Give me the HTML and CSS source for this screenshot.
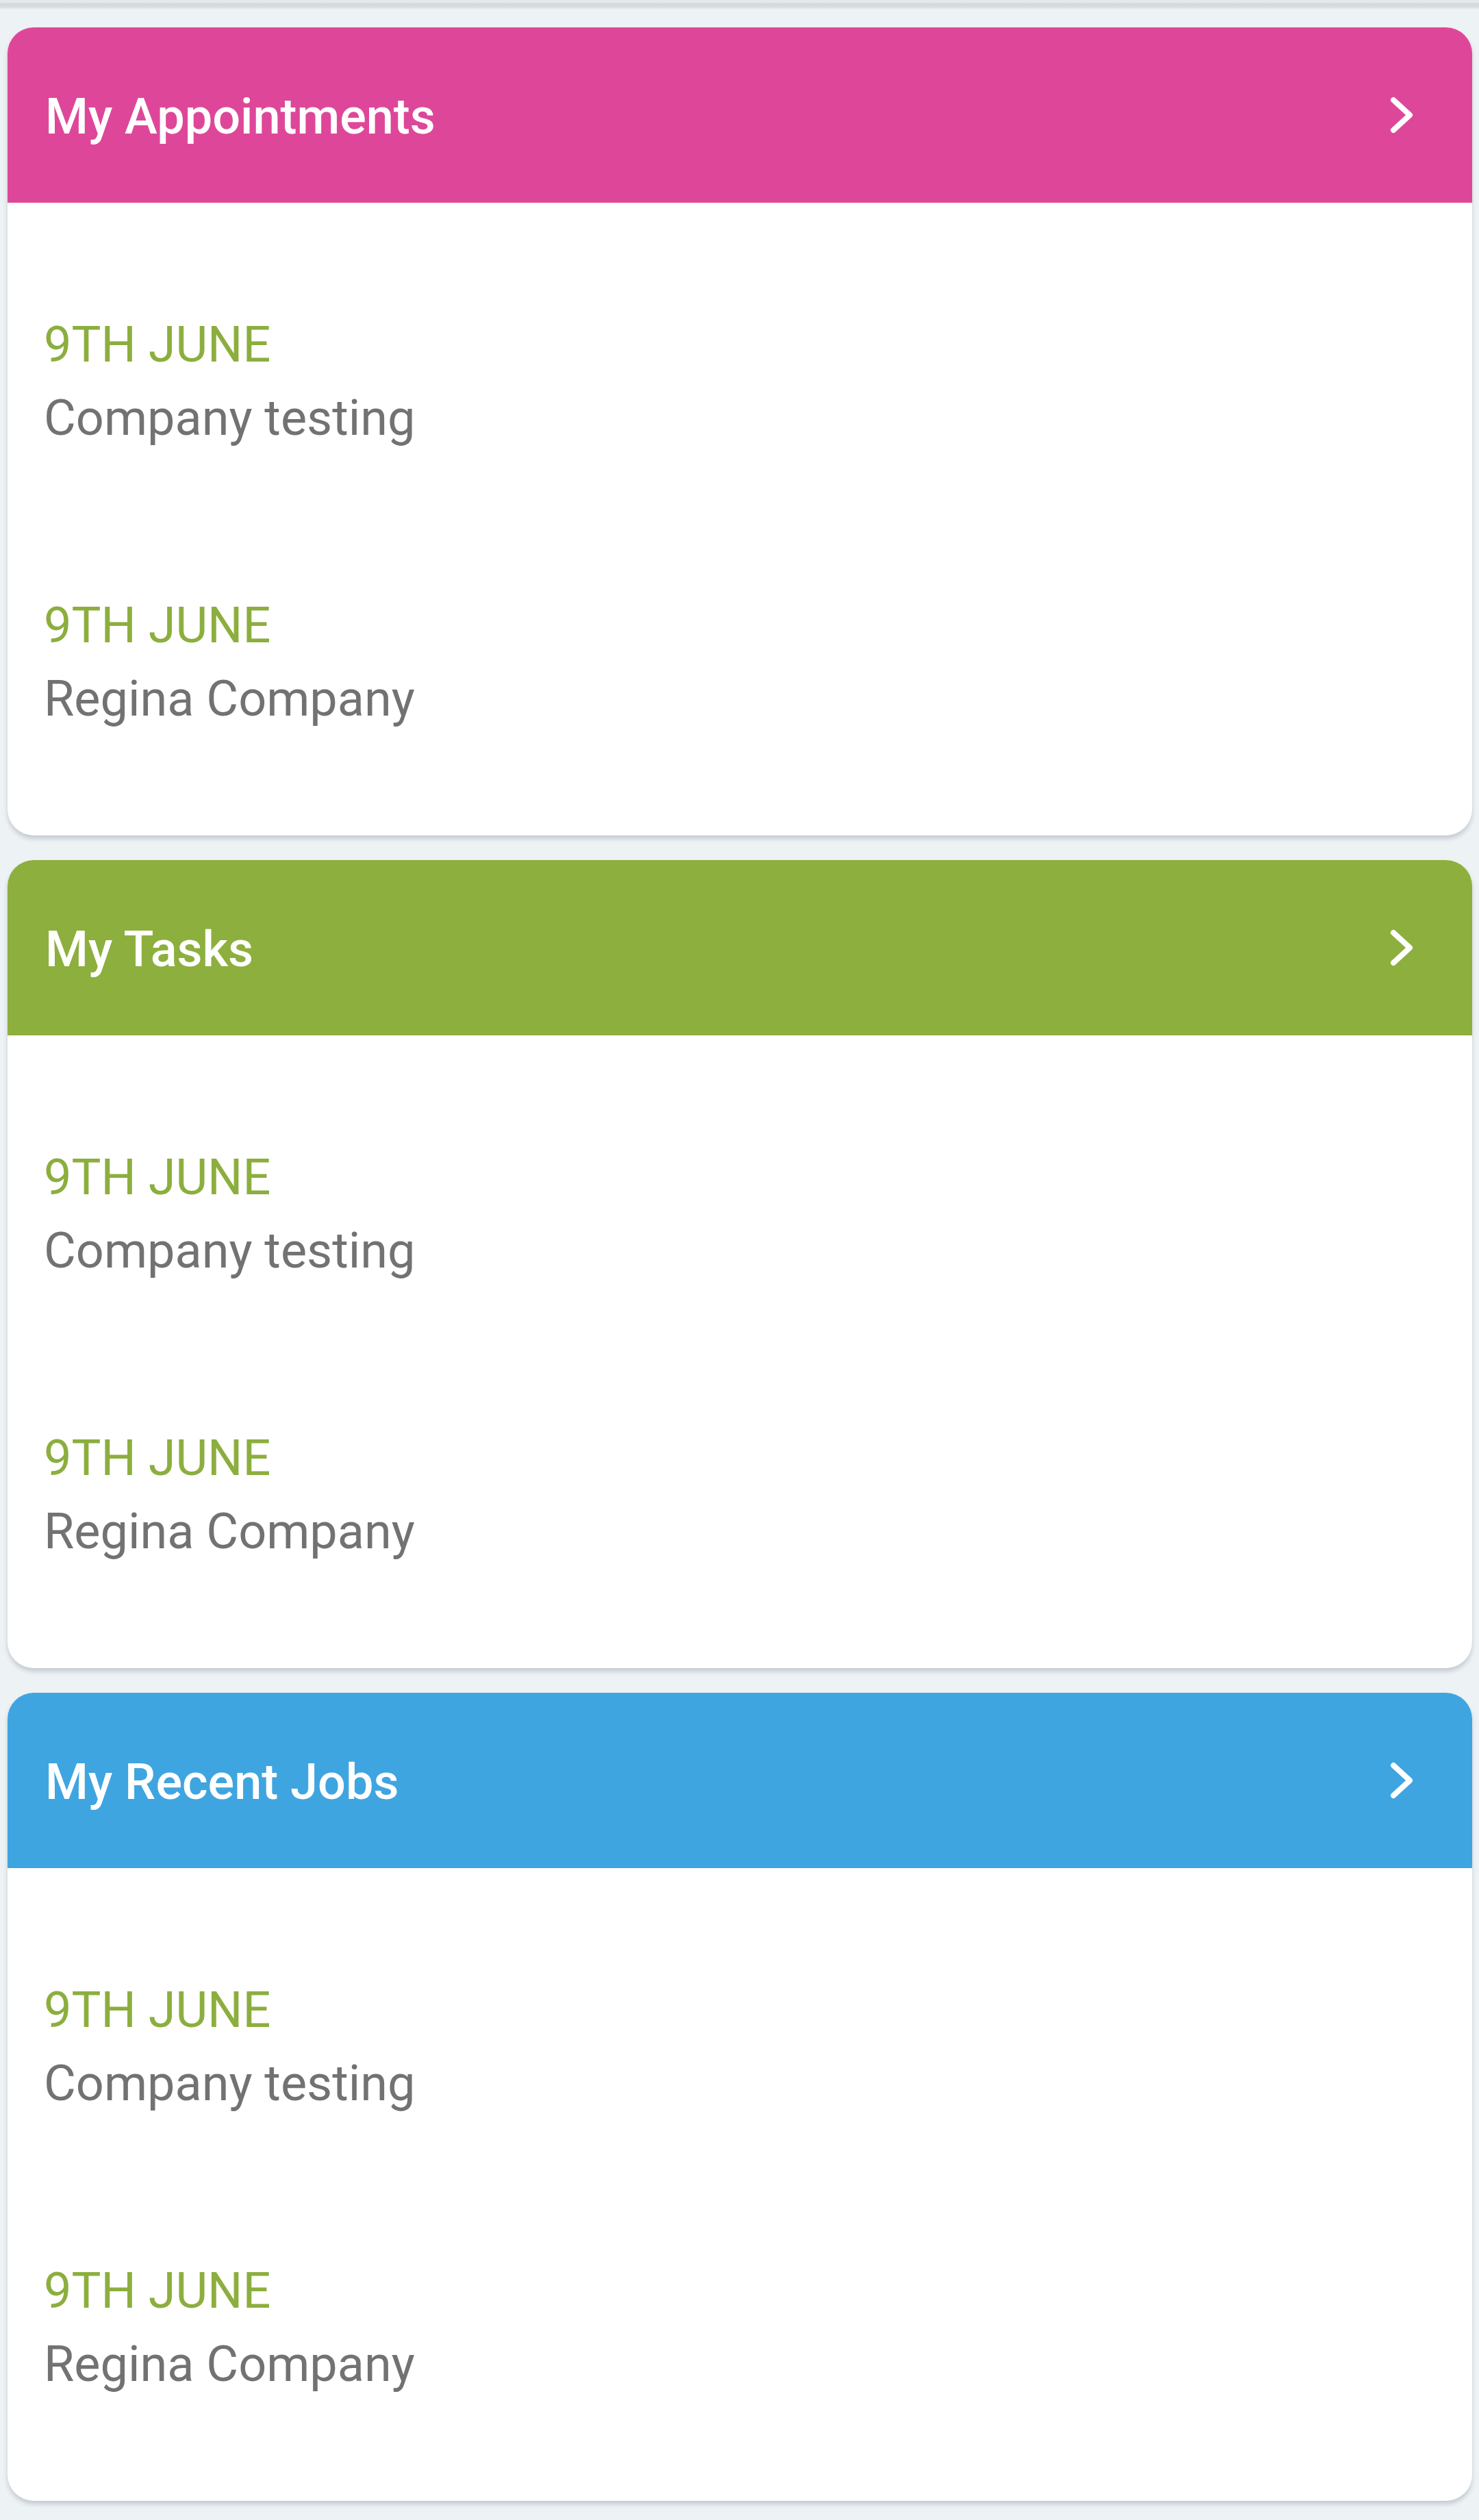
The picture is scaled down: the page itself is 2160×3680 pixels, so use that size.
FILE: index.html
```html
<!DOCTYPE html>
<html lang="en">
<head>
<meta charset="utf-8">
<title>Dashboard</title>
<link rel="stylesheet" href="styles.css">
</head>
<body>
<div class="topshade"></div>
<main class="list">
  <section class="card">
    <header class="card-head pink">
      <h2 class="card-title">My Appointments</h2>
      <svg class="chev" viewBox="0 0 40 56" width="40" height="56"><path d="M7 6 L31 28 L7 50" fill="none" stroke="#fff" stroke-width="8" stroke-linecap="round" stroke-linejoin="round"/></svg>
    </header>
    <div class="card-body">
      <div class="item"><div class="date">9TH JUNE</div><div class="name">Company testing</div></div>
      <div class="item"><div class="date">9TH JUNE</div><div class="name">Regina Company</div></div>
    </div>
  </section>
  <section class="card">
    <header class="card-head green">
      <h2 class="card-title">My Tasks</h2>
      <svg class="chev" viewBox="0 0 40 56" width="40" height="56"><path d="M7 6 L31 28 L7 50" fill="none" stroke="#fff" stroke-width="8" stroke-linecap="round" stroke-linejoin="round"/></svg>
    </header>
    <div class="card-body">
      <div class="item"><div class="date">9TH JUNE</div><div class="name">Company testing</div></div>
      <div class="item"><div class="date">9TH JUNE</div><div class="name">Regina Company</div></div>
    </div>
  </section>
  <section class="card">
    <header class="card-head blue">
      <h2 class="card-title">My Recent Jobs</h2>
      <svg class="chev" viewBox="0 0 40 56" width="40" height="56"><path d="M7 6 L31 28 L7 50" fill="none" stroke="#fff" stroke-width="8" stroke-linecap="round" stroke-linejoin="round"/></svg>
    </header>
    <div class="card-body">
      <div class="item"><div class="date">9TH JUNE</div><div class="name">Company testing</div></div>
      <div class="item"><div class="date">9TH JUNE</div><div class="name">Regina Company</div></div>
    </div>
  </section>
</main>
</body>
</html>
```
FILE: styles.css
```css
html, body {
  margin: 0;
  padding: 0;
  background: #edf2f5;
  font-family: Roboto, "Noto Sans", "Liberation Sans", sans-serif;
}

.topshade {
  height: 14px;
  background: linear-gradient(to bottom, #e4e8ea 0px, #e4e8ea 4px, #d3d8db 5px, #d7dcdf 10px, #edf2f5 14px);
}

.list {
  display: flex;
  flex-direction: column;
  gap: 36px;
  padding: 26px 10px 28px 11px;
}

.card {
  background: #ffffff;
  border-radius: 38px;
  overflow: hidden;
  box-shadow: 0 5px 6px rgba(60, 70, 80, 0.22);
}

.card-head {
  height: 256px;
  box-sizing: border-box;
  display: flex;
  align-items: center;
  justify-content: space-between;
  padding: 6px 82px 0 55px;
}

.pink { background: #de4799; }
.green { background: #8daf3e; }
.blue { background: #3fa5e0; }

.card-title {
  margin: 0;
  font-size: 72px;
  line-height: 72px;
  font-weight: 500;
  color: #ffffff;
}

.chev {
  display: block;
  margin-top: -6px;
}

.card-body {
  padding: 56px 53px 48px 53px;
}

.item {
  padding: 98px 0;
}

.date {
  font-size: 72px;
  line-height: 107px;
  color: #8cae3e;
}

.name {
  font-size: 72px;
  line-height: 107px;
  color: #727272;
}
```
